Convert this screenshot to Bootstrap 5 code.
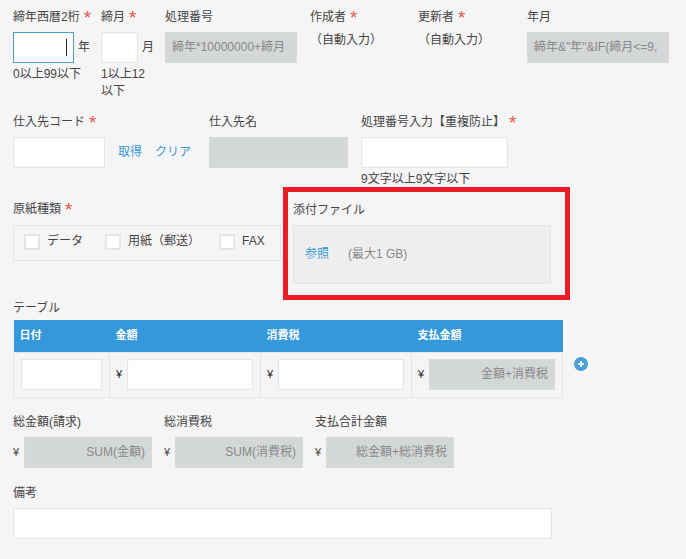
<!DOCTYPE html>
<html lang="ja">

<head>
    <meta charset="UTF-8">
    <title>フォーム</title>
    <link href="https://cdn.jsdelivr.net/npm/bootstrap@5.3.0/dist/css/bootstrap.min.css" rel="stylesheet">
    <style>
        body {
            background: #f5f5f5;
            color: #444;
            font-family: "Liberation Sans", "Noto Sans CJK JP", sans-serif;
            font-size: 12px;
            line-height: 17px;
            width: 686px;
            height: 559px;
            overflow: hidden;
        }

        .sheet {
            position: relative;
            padding-left: 13px;
            height: 559px;
        }

        .fld-label {
            height: 32px;
            padding-top: 9px;
            line-height: 16px;
            white-space: nowrap;
        }

        .req {
            color: #e2574c;
            font-size: 19px;
            line-height: 0;
            margin-left: 4px;
            vertical-align: -3px;
        }

        .form-control.box-input {
            height: 31px;
            padding: 0 7px;
            border: 1px solid #e3e7e8;
            border-radius: 0;
            background: #fff;
            box-shadow: inset 0 0 2px #eee;
            font-size: 12px;
        }

        .box-focus {
            width: 61px;
            height: 31px;
            border: 1px solid #4a9cc9;
            background: #fff;
            padding-right: 6px;
        }

        .caret-mark {
            width: 1px;
            height: 17px;
            background: #222;
        }

        .box-calc {
            height: 31px;
            padding: 0 6px;
            background: #d4d7d7;
            border: 1px solid #d8dada;
            color: #888;
            white-space: nowrap;
            overflow: hidden;
        }

        .hint {
            margin-top: 3px;
            line-height: 17px;
        }

        .unit {
            margin-left: 4px;
            line-height: 31px;
        }

        .auto-val {
            padding-left: 0;
        }

        .lnk {
            color: #3498db;
            text-decoration: none;
        }

        /* row heights come from the original form's field rows */
        .row-a { height: 105px; }
        .row-b { height: 87px; }
        .row-c { height: 107px; }
        .row-d { height: 85px; }
        .row-e { height: 71px; }

        .w-a1 { width: 88px; }
        .w-a2 { width: 64px; }
        .w-a3 { width: 145px; }
        .w-a4 { width: 108px; }
        .w-a5 { width: 109px; }
        .w-a6 { width: 142px; }
        .w-b1 { width: 92px; }
        .w-b2 { width: 104px; padding: 32px 0 0 13px; line-height: 31px; }
        .w-b3 { width: 139px; margin-right: 13px; }
        .w-b4 { width: 147px; }
        .w-c1 { width: 268px; margin-right: 12px; }
        .w-c2 { width: 258px; }
        .w-e { width: 139px; margin-right: 12px; }
        .w-note { width: 539px; }
        .w-in-a2 { width: 37px; }
        .w-hint-a2 { width: 50px; }
        .w-calc-a3 { width: 132px; }

        .lbl-tall { height: 33px; }
        .lbl-file { padding-top: 10px; }

        .gap-clear { margin-left: 13px; }

        .check-box {
            height: 36px;
            border: 1px solid #e3e7e8;
            padding: 0 0 3px 10px;
        }

        .check-item {
            margin-right: 19px;
            white-space: nowrap;
        }

        .check-item:first-child {
            margin-right: 22px;
        }

        .form-check-input.chk {
            width: 16px;
            height: 16px;
            margin: 0 7px 0 0;
            border: 2px solid #e3e7e8;
            border-radius: 0;
            background-color: #fff;
        }

        .file-box {
            height: 59px;
            padding-left: 11px;
            padding-bottom: 1px;
            background: #eee;
            border: 1px solid #e3e7e8;
        }

        .file-limit {
            color: #888;
            margin-left: 19px;
        }

        .red-frame {
            position: absolute;
            left: 283px;
            top: 187px;
            width: 287px;
            height: 113px;
            border: 5px solid #ed1c24;
        }

        .tbl-label {
            padding-top: 1px;
            line-height: 16px;
            margin-bottom: 4px;
        }

        .sub-tbl {
            width: 550px;
            flex: none;
            margin: 0;
            table-layout: fixed;
            --bs-table-bg: transparent;
            border-color: #e3e7e8;
        }

        .sub-tbl th {
            height: 32px;
            padding: 0 6px;
            background: #3498db;
            color: #fff;
            font-size: 11px;
            font-weight: 700;
            border: 0;
            vertical-align: middle;
        }

        .sub-tbl td {
            height: 45px;
            padding: 6px 7px 6px 6px;
            border: 1px solid #e3e7e8;
            vertical-align: middle;
        }

        .sub-tbl td:first-child {
            padding-left: 7px;
        }

        .col-date { width: 96px; }
        .col-money { width: 151px; }
        .col-pay { width: 151px; }

        .yen {
            width: 11px;
            flex: none;
            font-size: 11px;
        }

        .add-row {
            margin: 37px 0 0 11px;
        }
    </style>
</head>

<body>
    <div class="sheet">
        <div class="d-flex row-a">
            <div class="w-a1">
                <div class="fld-label">締年西暦2桁<span class="req">*</span></div>
                <div class="d-flex">
                    <div class="box-focus d-flex align-items-center justify-content-end flex-shrink-0"><span class="caret-mark"></span></div>
                    <span class="unit">年</span>
                </div>
                <div class="hint">0以上99以下</div>
            </div>
            <div class="w-a2">
                <div class="fld-label">締月<span class="req">*</span></div>
                <div class="d-flex">
                    <input type="text" class="form-control box-input flex-shrink-0 w-in-a2">
                    <span class="unit">月</span>
                </div>
                <div class="hint w-hint-a2">1以上12以下</div>
            </div>
            <div class="w-a3">
                <div class="fld-label">処理番号</div>
                <div class="box-calc d-flex align-items-center w-calc-a3">締年*10000000+締月</div>
            </div>
            <div class="w-a4">
                <div class="fld-label">作成者<span class="req">*</span></div>
                <div class="auto-val">（自動入力）</div>
            </div>
            <div class="w-a5">
                <div class="fld-label">更新者<span class="req">*</span></div>
                <div class="auto-val">（自動入力）</div>
            </div>
            <div class="w-a6">
                <div class="fld-label">年月</div>
                <div class="box-calc d-flex align-items-center">締年&amp;"年"&amp;IF(締月&lt;=9,</div>
            </div>
        </div>

        <div class="d-flex row-b">
            <div class="w-b1">
                <div class="fld-label">仕入先コード<span class="req">*</span></div>
                <input type="text" class="form-control box-input">
            </div>
            <div class="w-b2 d-flex align-items-start">
                <a href="#" class="lnk">取得</a>
                <a href="#" class="lnk gap-clear">クリア</a>
            </div>
            <div class="w-b3">
                <div class="fld-label">仕入先名</div>
                <div class="box-calc"></div>
            </div>
            <div class="w-b4">
                <div class="fld-label">処理番号入力【重複防止】<span class="req">*</span></div>
                <input type="text" class="form-control box-input">
                <div class="hint">9文字以上9文字以下</div>
            </div>
        </div>

        <div class="d-flex row-c">
            <div class="w-c1">
                <div class="fld-label lbl-tall">原紙種類<span class="req">*</span></div>
                <div class="check-box d-flex align-items-center">
                    <label class="check-item d-flex align-items-center"><input type="checkbox" class="form-check-input chk">データ</label>
                    <label class="check-item d-flex align-items-center"><input type="checkbox" class="form-check-input chk">用紙（郵送）</label>
                    <label class="check-item d-flex align-items-center"><input type="checkbox" class="form-check-input chk">FAX</label>
                </div>
            </div>
            <div class="w-c2">
                <div class="fld-label lbl-tall lbl-file">添付ファイル</div>
                <div class="file-box d-flex align-items-center">
                    <a href="#" class="lnk">参照</a>
                    <span class="file-limit">(最大1 GB)</span>
                </div>
            </div>
        </div>

        <div class="tbl-label">テーブル</div>
        <div class="d-flex align-items-start row-d">
            <table class="table sub-tbl">
                <thead>
                    <tr>
                        <th class="col-date">日付</th>
                        <th class="col-money">金額</th>
                        <th class="col-money">消費税</th>
                        <th class="col-pay">支払金額</th>
                    </tr>
                </thead>
                <tbody>
                    <tr>
                        <td><input type="text" class="form-control box-input"></td>
                        <td>
                            <div class="d-flex align-items-center"><span class="yen">¥</span><input type="text" class="form-control box-input"></div>
                        </td>
                        <td>
                            <div class="d-flex align-items-center"><span class="yen">¥</span><input type="text" class="form-control box-input"></div>
                        </td>
                        <td>
                            <div class="d-flex align-items-center"><span class="yen">¥</span>
                                <div class="box-calc flex-grow-1 d-flex align-items-center justify-content-end">金額+消費税</div>
                            </div>
                        </td>
                    </tr>
                </tbody>
            </table>
            <svg class="add-row" width="14" height="14" viewBox="0 0 14 14">
                <circle cx="7" cy="7" r="7" fill="#4f9fd8" />
                <path d="M7 4v6M4 7h6" stroke="#fff" stroke-width="1.6" />
            </svg>
        </div>

        <div class="d-flex row-e">
            <div class="w-e">
                <div class="fld-label">総金額(請求)</div>
                <div class="d-flex align-items-center"><span class="yen">¥</span>
                    <div class="box-calc flex-grow-1 d-flex align-items-center justify-content-end">SUM(金額)</div>
                </div>
            </div>
            <div class="w-e">
                <div class="fld-label">総消費税</div>
                <div class="d-flex align-items-center"><span class="yen">¥</span>
                    <div class="box-calc flex-grow-1 d-flex align-items-center justify-content-end">SUM(消費税)</div>
                </div>
            </div>
            <div class="w-e">
                <div class="fld-label">支払合計金額</div>
                <div class="d-flex align-items-center"><span class="yen">¥</span>
                    <div class="box-calc flex-grow-1 d-flex align-items-center justify-content-end">総金額+総消費税</div>
                </div>
            </div>
        </div>

        <div class="w-note">
            <div class="fld-label">備考</div>
            <input type="text" class="form-control box-input">
        </div>

        <div class="red-frame"></div>
    </div>

    <script src="https://cdn.jsdelivr.net/npm/bootstrap@5.3.0/dist/js/bootstrap.bundle.min.js"></script>
</body>

</html>
